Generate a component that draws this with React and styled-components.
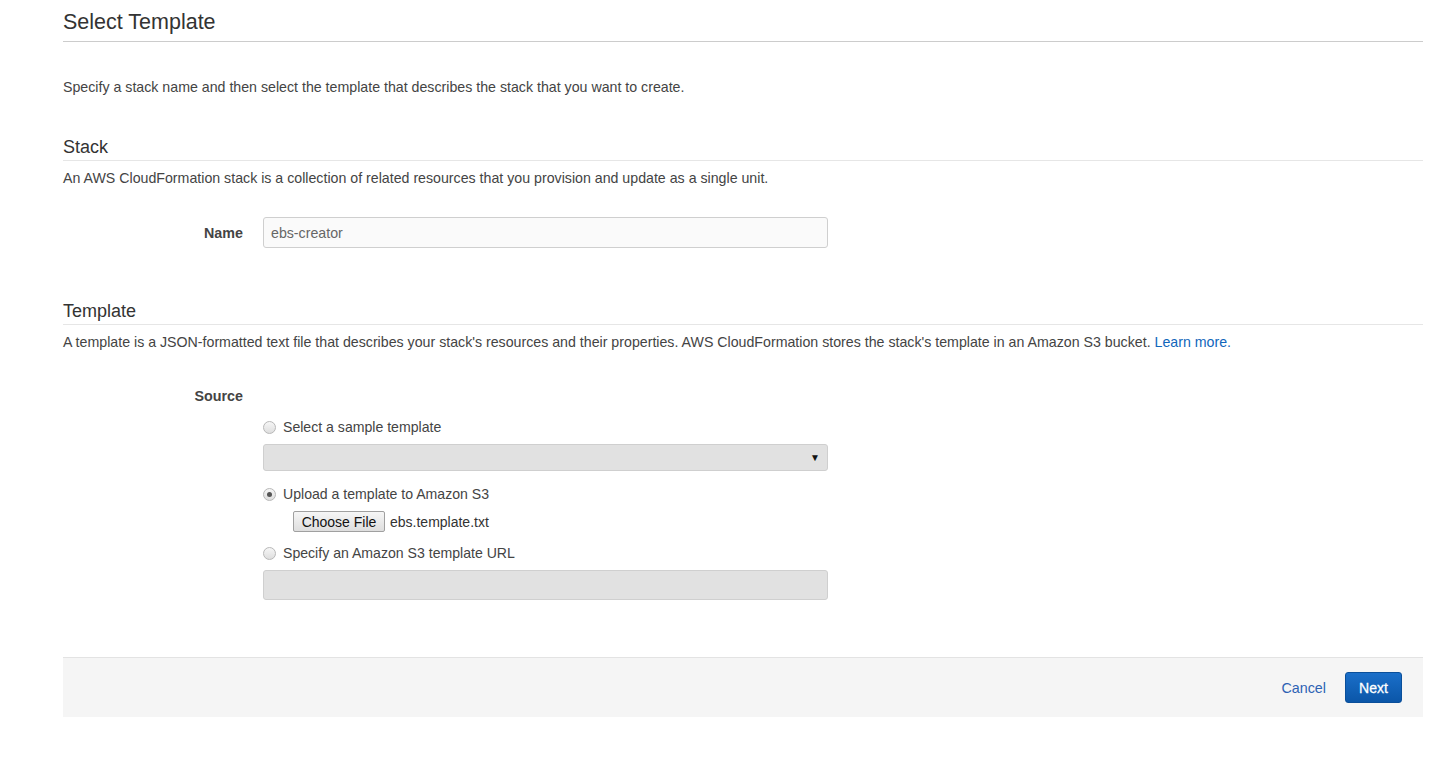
import React from "react";
import styled, { createGlobalStyle } from "styled-components";

const Global = createGlobalStyle`
  html, body { margin: 0; padding: 0; background: #fff; }
  body { font-family: "Liberation Sans", Arial, sans-serif; color: #444; font-size: 14px; }
`;

const Page = styled.div`
  padding: 0 11px 0 63px;
`;

const Title = styled.h1`
  margin: 9px 0 0;
  padding-bottom: 6px;
  border-bottom: 1px solid #cccccc;
  font-size: 21.5px;
  line-height: 26px;
  font-weight: normal;
  color: #333;
`;

const Intro = styled.p`
  margin: ${(p) => p.$mt || 0}px 0 0;
  font-size: 14.2px;
  line-height: 18px;
  color: #444;
`;

const SectionHeading = styled.h2`
  margin: ${(p) => p.$mt}px 0 0;
  padding-bottom: 3px;
  border-bottom: 1px solid #e6e6e6;
  font-size: 18px;
  line-height: 20px;
  font-weight: normal;
  color: #333;
`;

const Link = styled.a`
  color: #1166bb;
  text-decoration: none;
  cursor: pointer;
`;

const FormRow = styled.div`
  display: grid;
  grid-template-columns: 180px 565px;
  column-gap: 20px;
  margin-top: ${(p) => p.$mt}px;
  align-items: ${(p) => p.$align || "center"};
`;

const Label = styled.label`
  text-align: right;
  font-weight: bold;
  font-size: 14.3px;
  line-height: 18px;
  color: #444;
`;

const TextInput = styled.div`
  box-sizing: border-box;
  height: ${(p) => p.$h || 31}px;
  border: 1px solid #cfcfcf;
  border-radius: 3px;
  background: ${(p) => (p.$disabled ? "#e1e1e1" : "#fafafa")};
  padding: 0 7px;
  display: flex;
  align-items: center;
  font-size: 14.2px;
  color: #666;
`;

const SelectBox = styled(TextInput)`
  justify-content: flex-end;
  padding-right: 7px;
  color: #111;
  font-size: 10px;
`;

const Options = styled.div`
  grid-column: 2;
  display: flex;
  flex-direction: column;
`;

const RadioLine = styled.div`
  display: flex;
  align-items: center;
  gap: 7px;
  margin-top: ${(p) => p.$mt}px;
  font-size: 14.1px;
  line-height: 18px;
  color: #444;
`;

const Radio = styled.span`
  box-sizing: border-box;
  width: 13px;
  height: 13px;
  border-radius: 50%;
  border: 1px solid #b8b8b8;
  background: linear-gradient(#f6f6f6, #dedede);
  display: flex;
  align-items: center;
  justify-content: center;
  &::after {
    content: "";
    width: 5px;
    height: 5px;
    border-radius: 50%;
    background: ${(p) => (p.$checked ? "#555" : "transparent")};
  }
`;

const Spaced = styled.div`
  margin-top: ${(p) => p.$mt}px;
`;

const FileRow = styled.div`
  display: flex;
  align-items: center;
  gap: 5px;
  margin-top: 8px;
  padding-left: 30px;
  font-size: 14px;
  color: #333;
`;

const FileButton = styled.button`
  box-sizing: border-box;
  height: 21px;
  width: 92px;
  padding: 0;
  border: 1px solid #a0a0a0;
  border-radius: 2px;
  background: linear-gradient(#f6f6f6, #dedede);
  font-family: "Liberation Sans", Arial, sans-serif;
  font-size: 14px;
  color: #111;
`;

const Footer = styled.div`
  margin-top: 57px;
  height: 60px;
  box-sizing: border-box;
  border-top: 1px solid #e3e3e3;
  background: #f5f5f5;
  display: flex;
  align-items: center;
  justify-content: flex-end;
  gap: 19px;
  padding-right: 21px;
`;

const CancelLink = styled(Link)`
  font-size: 14.3px;
  color: #2d62b4;
`;

const PrimaryButton = styled.button`
  box-sizing: border-box;
  height: 31px;
  width: 57px;
  border: 1px solid #0a4f9a;
  border-radius: 3px;
  background: linear-gradient(#1a6fc9, #0b56a8);
  color: #fff;
  font-family: "Liberation Sans", Arial, sans-serif;
  font-size: 14px;
  font-weight: normal;
  -webkit-text-stroke: 0.3px #fff;
`;

export default function App() {
  return (
    <Page>
      <Global />
      <Title>Select Template</Title>
      <Intro $mt={36}>
        Specify a stack name and then select the template that describes the stack that you want to create.
      </Intro>

      <SectionHeading $mt={41}>Stack</SectionHeading>
      <Intro $mt={8}>
        An AWS CloudFormation stack is a collection of related resources that you provision and update as a single unit.
      </Intro>
      <FormRow $mt={30}>
        <Label>Name</Label>
        <TextInput>ebs-creator</TextInput>
      </FormRow>

      <SectionHeading $mt={53}>Template</SectionHeading>
      <Intro $mt={8}>
        A template is a JSON-formatted text file that describes your stack's resources and their properties. AWS
        CloudFormation stores the stack's template in an Amazon S3 bucket. <Link>Learn more.</Link>
      </Intro>
      <FormRow $mt={36} $align="start">
        <Label>Source</Label>
      </FormRow>
      <FormRow $mt={0} $align="start">
        <span />
        <Options>
          <RadioLine $mt={13}>
            <Radio />
            Select a sample template
          </RadioLine>
          <Spaced $mt={8}>
            <SelectBox $h={27} $disabled>▼</SelectBox>
          </Spaced>
          <RadioLine $mt={14}>
            <Radio $checked />
            Upload a template to Amazon S3
          </RadioLine>
          <FileRow>
            <FileButton>Choose File</FileButton>
            ebs.template.txt
          </FileRow>
          <RadioLine $mt={12}>
            <Radio />
            Specify an Amazon S3 template URL
          </RadioLine>
          <Spaced $mt={8}>
            <TextInput $h={30} $disabled />
          </Spaced>
        </Options>
      </FormRow>

      <Footer>
        <CancelLink>Cancel</CancelLink>
        <PrimaryButton>Next</PrimaryButton>
      </Footer>
    </Page>
  );
}
